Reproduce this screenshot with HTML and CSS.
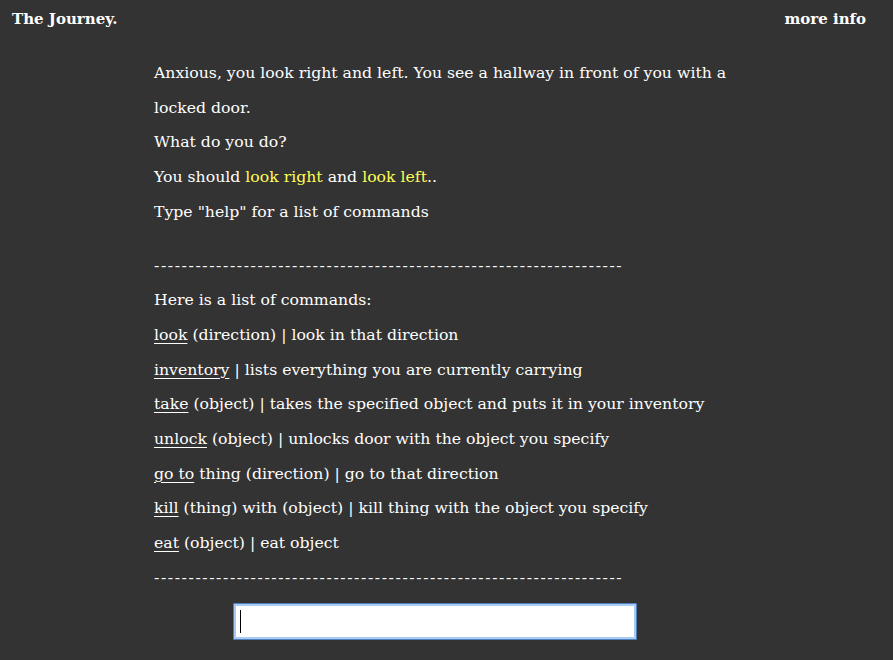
FILE: index.html
```html
<!DOCTYPE html>
<html>
<head>
<meta charset="utf-8">
<link rel="stylesheet" href="styles.css">
</head>
<body>
<header class="topbar">
  <span class="brand">The Journey.</span>
  <span class="more">more info</span>
</header>
<main class="story">
  <p>Anxious, you look right and left. You see a hallway in front of you with a locked door.</p>
  <p>What do you do?</p>
  <p>You should <span class="hl">look right</span> and <span class="hl">look left</span>..</p>
  <p>Type "help" for a list of commands</p>
  <p class="rule rule-first">--------------------------------------------------------------------</p>
  <p>Here is a list of commands:</p>
  <p><u>look</u> (direction) | look in that direction</p>
  <p><u>inventory</u> | lists everything you are currently carrying</p>
  <p><u>take</u> (object) | takes the specified object and puts it in your inventory</p>
  <p><u>unlock</u> (object) | unlocks door with the object you specify</p>
  <p><u>go to</u> thing (direction) | go to that direction</p>
  <p><u>kill</u> (thing) with (object) | kill thing with the object you specify</p>
  <p><u>eat</u> (object) | eat object</p>
  <p class="rule">--------------------------------------------------------------------</p>
  <div class="prompt">
    <div class="field">
      <input class="cmd" type="text" aria-label="command">
      <span class="caret"></span>
    </div>
  </div>
</main>
</body>
</html>
```

FILE: styles.css
```css
html {
  background: #333333;
}
body {
  margin: 0;
  width: 879px;
  color: #ffffff;
  font-family: "DejaVu Serif", serif;
  font-size: 15.7px;
}
.topbar {
  display: flex;
  justify-content: space-between;
  align-items: center;
  height: 38px;
  padding: 0 13px 0 12px;
  font-weight: bold;
  font-size: 15px;
}
.story {
  width: 600px;
  margin: 0 0 0 154px;
  padding-top: 18px;
  line-height: 34.7px;
}
.story p {
  margin: 0;
}
.hl {
  color: #ffff55;
}
.story u {
  text-decoration-thickness: 1px;
  text-underline-offset: 3px;
}
.rule {
  width: 471px;
  letter-spacing: 1.6px;
  white-space: nowrap;
  overflow: hidden;
}
.story .rule-first {
  margin-top: 19px;
}
.prompt {
  padding: 7px 0 30px 79px;
}
.field {
  position: relative;
  width: 404px;
}
.cmd {
  display: block;
  box-sizing: border-box;
  width: 404px;
  height: 37px;
  margin: 0;
  border: 1px solid #4f7fbf;
  border-radius: 1px;
  background: #ffffff;
  box-shadow: inset 0 0 0 2px #a8ccf2;
  outline: none;
  padding: 0 6px;
  font-size: 15px;
}
.caret {
  position: absolute;
  left: 7px;
  top: 7px;
  width: 1px;
  height: 23px;
  background: #000000;
}
```
